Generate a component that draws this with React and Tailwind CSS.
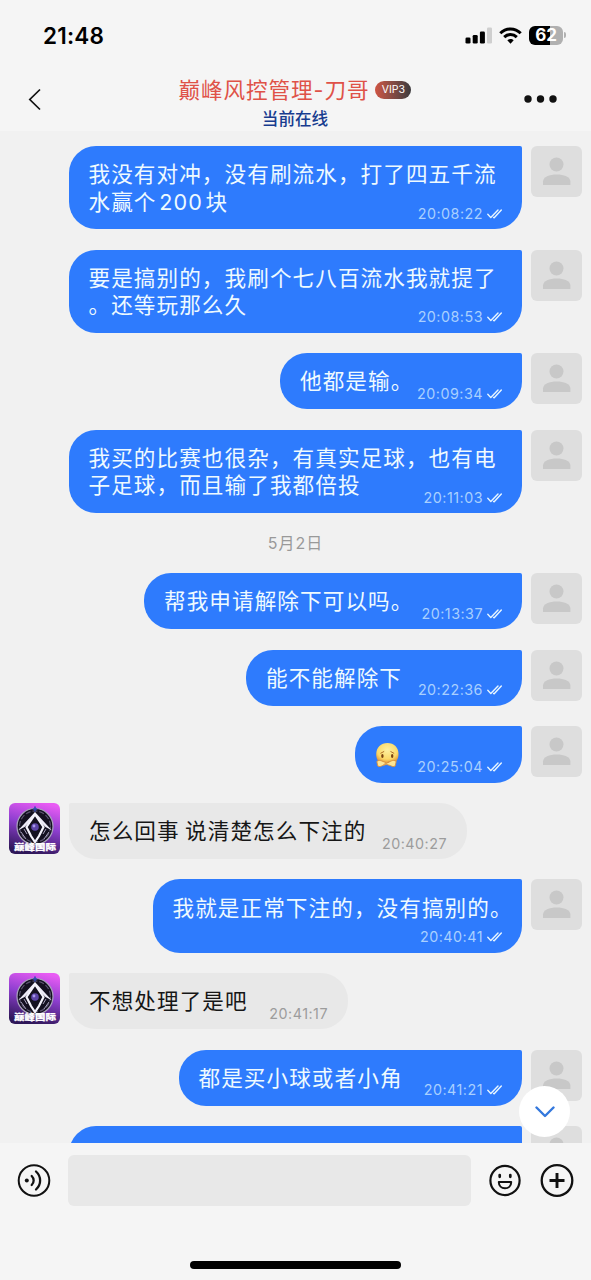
import React from 'react';

const messages = [
  { id: 1, mine: true, lines: ['我没有对冲，没有刷流水，打了四五千流', '水赢个200块'], time: '20:08:22', size: 'w-[453.5px] h-[83.3px]' },
  { id: 2, mine: true, lines: ['要是搞别的，我刷个七八百流水我就提了', '。还等玩那么久'], time: '20:08:53', size: 'w-[453.5px] h-[83.3px]' },
  { id: 3, mine: true, lines: ['他都是输。'], time: '20:09:34', size: 'w-[242px] h-[56.3px]' },
  { id: 4, mine: true, lines: ['我买的比赛也很杂，有真实足球，也有电', '子足球，而且输了我都倍投'], time: '20:11:03', size: 'w-[453.5px] h-[83.3px]' },
  { id: 5, date: '5月2日' },
  { id: 6, mine: true, lines: ['帮我申请解除下可以吗。'], time: '20:13:37', size: 'w-[378px] h-[56.3px]' },
  { id: 7, mine: true, lines: ['能不能解除下'], time: '20:22:36', size: 'w-[276px] h-[56.3px]' },
  { id: 8, mine: true, emoji: true, time: '20:25:04', size: 'w-[167.5px] h-[56.3px]' },
  { id: 9, mine: false, lines: ['怎么回事 说清楚怎么下注的'], time: '20:40:27', size: 'w-[398px] h-[56.3px]' },
  { id: 10, mine: true, lines: ['我就是正常下注的，没有搞别的。'], time: '20:40:41', size: 'w-[369.5px] h-[73.3px]' },
  { id: 11, mine: false, lines: ['不想处理了是吧'], time: '20:41:17', size: 'w-[279px] h-[56.3px]' },
  { id: 12, mine: true, lines: ['都是买小球或者小角'], time: '20:41:21', size: 'w-[343.5px] h-[56.3px]' },
  { id: 13, mine: true, lines: [], time: '', size: 'w-[453.5px] h-[83.3px]' },
];

const DoubleCheck = () => (
  <svg width="15" height="10" viewBox="0 0 15 10" fill="none" stroke="#e8f6ff" strokeWidth="1.4" strokeLinecap="round" strokeLinejoin="round">
    <path d="M0.8 5.2L3.8 8.6L11 1" />
    <path d="M6.6 8.4L7.2 8.8L14.3 1" />
  </svg>
);

// Sorry face: hands crossed over the mouth
const SorryEmoji = () => (
  <svg width="26" height="27" viewBox="0 0 26 27">
    <defs>
      <radialGradient id="face" cx="50%" cy="35%" r="65%">
        <stop offset="0" stopColor="#fdf0a0" />
        <stop offset="0.7" stopColor="#fbd968" />
        <stop offset="1" stopColor="#e49a3a" />
      </radialGradient>
    </defs>
    <path d="M12.500 1C19 1 23.500 5.500 23.500 12c0 4.500-2 8-4.500 9H5.500C3 20 1.200 16.500 1.200 12C1.200 5.500 6 1 12.500 1z" fill="url(#face)" />
    <path d="M5.800 11.200l3-1.600M18.800 11.200l-3-1.600" stroke="#b0702a" strokeWidth="1" strokeLinecap="round" />
    <ellipse cx="7.400" cy="14" rx="1.200" ry="2" fill="#7a4312" />
    <ellipse cx="17.200" cy="14" rx="1.200" ry="2" fill="#7a4312" />
    <path d="M1.800 19.500c1.500-1.500 3.500-1.200 5-.5l4.700 1.800 4.700-1.800c1.500-.7 3.500-1 5 .5l-1 4.500c-1.500 1-3.200.4-4.500-.3l-4.200-1.300-4.200 1.300c-1.300.7-3 1.300-4.500.3z" fill="#fde596" stroke="#d98f3a" strokeWidth="0.900" />
    <path d="M8.500 22.500l6-2.500" stroke="#d98f3a" strokeWidth="0.900" />
  </svg>
);

const UserAvatar = () => (
  <div className="flex h-[51px] w-[51px] shrink-0 justify-center overflow-hidden rounded-md bg-[#dedede]">
    <svg width="51" height="51" viewBox="0 0 51 51" fill="#c8c8c8">
      <circle cx="25.500" cy="18.500" r="7" />
      <path d="M12 39v-3.500c0-4.500 6.500-7 13.700-7s13.700 2.500 13.700 7V39z" />
    </svg>
  </div>
);

const BrandAvatar = () => (
  <svg className="shrink-0 rounded-md" width="51" height="51" viewBox="0 0 51 51">
    <defs>
      <linearGradient id="brand" x1="0.700" y1="0" x2="0.450" y2="1">
        <stop offset="0" stopColor="#e95cf4" />
        <stop offset="0.450" stopColor="#8f3fd0" />
        <stop offset="1" stopColor="#2e1758" />
      </linearGradient>
    </defs>
    <rect width="51" height="51" fill="url(#brand)" />
    <circle cx="26" cy="23.500" r="18" fill="#141020" stroke="#a9a3bd" strokeWidth="1.200" />
    <circle cx="26" cy="23.500" r="15.500" fill="none" stroke="#5b5570" strokeWidth="1.200" strokeDasharray="5 2" />
    {/* Wings */}
    <path d="M9 27.500L21 14.500L26 9L31 14.500L43 27.500L36.500 24L26 13.500L15.500 24z" fill="#ece9f6" />
    {/* Diamond */}
    <path d="M26 11.500L34.500 24L30 33L26 39L22 33L17.500 24z" fill="#141020" stroke="#f4f2fb" strokeWidth="2.200" />
    <path d="M12 29l5 7M40 29l-5 7M15 26l3 5M37 26l-3 5" stroke="#a9a3bd" strokeWidth="1" />
    <circle cx="26" cy="24" r="3.800" fill="#5d45a8" />
    <circle cx="25" cy="23" r="1.400" fill="#a898ec" />
    <path d="M26 3.500v5M23.800 6h4.400" stroke="#2f49b0" strokeWidth="1.600" />
    <text
      x="26"
      y="46.500"
      textAnchor="middle"
      textLength="42"
      lengthAdjust="spacingAndGlyphs"
      fontSize="8.500"
      fontWeight="900"
      fill="#fff"
      stroke="#fff"
      strokeWidth="0.200"
      fontFamily="'Noto Sans CJK SC', sans-serif"
    >
      巅峰国际
    </text>
  </svg>
);

const Message = ({ msg }) => {
  if (msg.date) {
    return (
      <div className="flex h-[19.4px] shrink-0 items-center justify-center text-[16px] leading-none tracking-[1px] text-[#999]">
        {msg.date}
      </div>
    );
  }
  return (
    <div className={`flex shrink-0 items-start gap-[9px] px-[9px] ${msg.mine ? 'flex-row-reverse' : ''}`}>
      {msg.mine ? <UserAvatar /> : <BrandAvatar />}
      <div
        className={`grid shrink-0 grid-cols-1 px-[20px] ${msg.size} ${
          msg.mine ? 'rounded-[27px] rounded-tr-[2px] bg-[#2e7bfd] text-[#eefaff]' : 'rounded-[27px] rounded-tl-[2px] bg-[#e8e8e8] text-[#161616]'
        }`}
      >
        <div className="col-start-1 row-start-1 pt-[15.3px] text-[21.6px] leading-[27.3px] tracking-[1.08px] [word-spacing:-1.8px] whitespace-nowrap [text-autospace:normal]">
          {msg.emoji ? <SorryEmoji /> : msg.lines.map((line) => <p key={line}>{line}</p>)}
        </div>
        {msg.time && (
          <div
            className={`col-start-1 row-start-1 mb-[8.500px] flex items-center gap-[4px] self-end justify-self-end text-[14.300px] leading-[14px] tracking-[0.5px] ${
              msg.mine ? 'text-[#a9d0ff]' : 'text-[#9c9c9c]'
            }`}
          >
            <span>{msg.time}</span>
            {msg.mine && <DoubleCheck />}
          </div>
        )}
      </div>
    </div>
  );
};

const StatusBar = () => (
  <div className="flex h-[70px] items-center justify-between pr-[25px] pl-[43px]">
    <span className="pt-[1px] text-[22.500px] font-semibold tracking-[0.2px] text-black">21:48</span>
    <div className="flex items-center gap-[7px]">
      <svg width="27" height="17" viewBox="0 0 27 17">
        <rect x="0.500" y="10.500" width="5" height="6" rx="1.300" />
        <rect x="7.700" y="8" width="5" height="8.500" rx="1.300" />
        <rect x="14.900" y="4.500" width="5" height="12" rx="1.300" />
        <rect x="22" y="0.500" width="5" height="16" rx="1.300" fill="#cfcfcf" />
      </svg>
      <svg width="23" height="17" viewBox="0 0 23 17" fill="none" stroke="#000" strokeWidth="3">
        <path d="M1.300 6.200C7 .5 16 .5 21.700 6.200" />
        <path d="M5.200 10.200C8.800 6.700 14.200 6.700 17.800 10.200" />
        <path d="M11.500 16.800L8.300 13.300C10 11.600 13 11.600 14.700 13.300z" fill="#000" stroke="none" />
      </svg>
      <div className="flex items-center gap-[1px]">
        <div className="flex h-[19px] w-[34px] items-center justify-center rounded-[6px] bg-[linear-gradient(90deg,#000_62%,#b0b0b0_62%)] text-[17px] leading-none font-bold text-white">
          62
        </div>
        <div className="h-[6px] w-[2px] rounded-r-full bg-[#b0b0b0]" />
      </div>
    </div>
  </div>
);

const Header = () => (
  <div className="flex h-[61px] items-start justify-between pr-[34px] pl-[28px]">
    <svg className="mt-[18px]" width="14" height="23" viewBox="0 0 14 23" fill="none" stroke="#111" strokeWidth="1.700">
      <path d="M12 1.500L1.800 11.500L12 21.500" />
    </svg>
    <div className="ml-[24px] flex flex-col items-center">
      <div className="mt-[7px] flex h-[26px] items-center gap-[6px]">
        <span className="pt-[2px] text-[21.600px] leading-none tracking-[0.9px] whitespace-nowrap text-[#df5248]">巅峰风控管理-刀哥</span>
        <span className="flex h-[18px] w-[36px] items-center justify-center rounded-full bg-linear-to-r from-[#cf5443] to-[#3c3b3e] text-[10.5px] leading-none text-white">
          VIP3
        </span>
      </div>
      <span className="mt-[7px] text-[16.600px] leading-[18px] font-medium text-[#173c8f]">当前在线</span>
    </div>
    <svg className="mt-[25px]" width="33" height="8" viewBox="0 0 33 8" fill="#111">
      <circle cx="4" cy="4" r="3.700" />
      <circle cx="16.500" cy="4" r="3.700" />
      <circle cx="29" cy="4" r="3.700" />
    </svg>
  </div>
);

const ChatInput = () => (
  <div className="h-[137px] bg-[#f5f5f5] pt-[12px]">
    <div className="flex h-[51px] items-center">
      <svg className="mr-[17px] ml-[17px] shrink-0" width="34" height="34" viewBox="0 0 34 34" fill="none" stroke="#111" strokeWidth="2" strokeLinecap="round">
        <circle cx="17" cy="16.500" r="15.300" />
        <circle cx="9.800" cy="16.500" r="2" fill="#111" stroke="none" />
        <path d="M14.700 12C17.300 14.500 17.300 18.500 14.700 21" strokeWidth="2.300" />
        <path d="M19 7.500C24.500 12.500 24.500 20.500 19 25.500" strokeWidth="2.300" />
      </svg>
      <div className="h-[51px] w-[403px] rounded-md bg-[#e8e8e8]" />
      <svg className="ml-[18px] shrink-0" width="32" height="34" viewBox="0 0 32 34" fill="none" stroke="#111" strokeWidth="2.200" strokeLinecap="round" strokeLinejoin="round">
        <circle cx="16" cy="16.500" r="14.600" />
        <path d="M10.700 11v1.800M21.300 11v1.800" strokeWidth="2.700" />
        <path d="M9.800 18H22.200C22.200 22 19.500 24.300 16 24.300S9.800 22 9.800 18z" strokeWidth="2" />
      </svg>
      <svg className="ml-[19px] shrink-0" width="34" height="34" viewBox="0 0 34 34" fill="none" stroke="#111" strokeWidth="2.300">
        <circle cx="17" cy="16.500" r="15.300" />
        <path d="M17 9v15M9.500 16.500h15" strokeWidth="2.900" />
      </svg>
    </div>
    <div className="mx-auto mt-[55px] h-[8px] w-[211px] rounded-full bg-black" />
  </div>
);

const App = () => (
  <div lang="zh-CN" className="relative flex h-[1280px] w-[591px] flex-col overflow-hidden bg-[#f5f5f5] font-['Inter','Noto_Sans_CJK_SC',sans-serif]">
    <StatusBar />
    <Header />
    <div className="flex h-[1012px] flex-col gap-[20.300px] overflow-hidden bg-[#f1f1f1] pt-[15px]">
      {messages.map((msg) => (
        <Message key={msg.id} msg={msg} />
      ))}
    </div>
    <ChatInput />
    {/* Scroll to latest */}
    <button className="absolute top-[1086px] left-[519px] flex h-[51px] w-[51px] items-center justify-center rounded-full bg-white">
      <svg width="20" height="12" viewBox="0 0 20 12" fill="none" stroke="#3478dd" strokeWidth="2.400" strokeLinecap="round" strokeLinejoin="round">
        <path d="M1.500 1.500L10 10L18.500 1.500" />
      </svg>
    </button>
  </div>
);

export default App;
